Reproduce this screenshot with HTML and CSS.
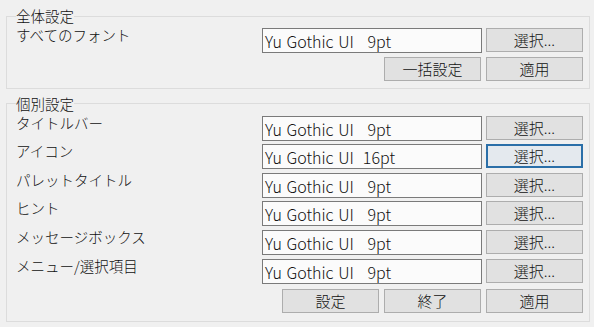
FILE: index.html
```html
<!DOCTYPE html>
<html lang="ja">

<head>
 <meta charset="UTF-8">
 <title>フォント設定</title>
 <link rel="stylesheet" href="styles.css">
</head>

<body>

 <fieldset class="group">
  <legend>全体設定</legend>
  <div class="row">
   <span class="label">すべてのフォント</span>
   <div class="fontbox">Yu Gothic UI   9pt</div>
   <button class="btn">選択...</button>
  </div>
  <div class="actions">
   <button class="btn">一括設定</button>
   <button class="btn">適用</button>
  </div>
 </fieldset>

 <fieldset class="group group-list">
  <legend>個別設定</legend>
  <div class="row">
   <span class="label">タイトルバー</span>
   <div class="fontbox">Yu Gothic UI   9pt</div>
   <button class="btn">選択...</button>
  </div>
  <div class="row">
   <span class="label">アイコン</span>
   <div class="fontbox">Yu Gothic UI  16pt</div>
   <button class="btn focus">選択...</button>
  </div>
  <div class="row">
   <span class="label">パレットタイトル</span>
   <div class="fontbox">Yu Gothic UI   9pt</div>
   <button class="btn">選択...</button>
  </div>
  <div class="row">
   <span class="label">ヒント</span>
   <div class="fontbox">Yu Gothic UI   9pt</div>
   <button class="btn">選択...</button>
  </div>
  <div class="row">
   <span class="label">メッセージボックス</span>
   <div class="fontbox">Yu Gothic UI   9pt</div>
   <button class="btn">選択...</button>
  </div>
  <div class="row">
   <span class="label">メニュー/選択項目</span>
   <div class="fontbox">Yu Gothic UI   9pt</div>
   <button class="btn">選択...</button>
  </div>
  <div class="actions">
   <button class="btn">設定</button>
   <button class="btn">終了</button>
   <button class="btn">適用</button>
  </div>
 </fieldset>

</body>

</html>
```

FILE: styles.css
```css
*,
*::before,
*::after {
 box-sizing: border-box;
}

body {
 margin: 0;
 padding: 7px 4px 0 6px;
 background: #f0f0f0;
 color: #111;
 font-family: "Noto Sans CJK JP", "Noto Sans", sans-serif;
 font-weight: 300;
 font-size: 14.5px;
 width: 594px;
 height: 327px;
 overflow: hidden;
}

.group {
 margin: 0;
 padding: 3px 6px 7px 9px;
 border: 1px solid #dcdcdc;
 min-width: 0;
}

.group legend {
 padding: 0;
 line-height: 18px;
}

.group-list {
 margin-top: 6px;
 padding-top: 3px;
 padding-bottom: 8px;
}

.row {
 display: grid;
 grid-template-columns: 1fr 220px 97px;
 column-gap: 4px;
 height: 24px;
 margin-bottom: 4.6px;
}

.label {
 line-height: 14px;
 white-space: nowrap;
}

.fontbox {
 border: 1px solid #7a7a7a;
 background: #fbfbfb;
 padding: 1px 2px 0;
 font-size: 16px;
 font-weight: 300;
 line-height: 22px;
 white-space: pre;
 word-spacing: 1px;
}

.btn {
 height: 24px;
 width: 97px;
 margin: 0;
 padding: 0;
 border: 1px solid #adadad;
 background: #e1e1e1;
 color: #111;
 font-family: inherit;
 font-weight: 300;
 font-size: 15px;
 line-height: 22px;
}

.btn.focus {
 border-color: #2b6fa8;
 box-shadow: inset 0 0 0 1px #2b6fa8;
 background: #e4e9ee;
}

.actions {
 display: flex;
 justify-content: flex-end;
 gap: 5px;
 margin-top: 2.5px;
}

.group-list .actions {
 margin-top: 6.5px;
}
```
